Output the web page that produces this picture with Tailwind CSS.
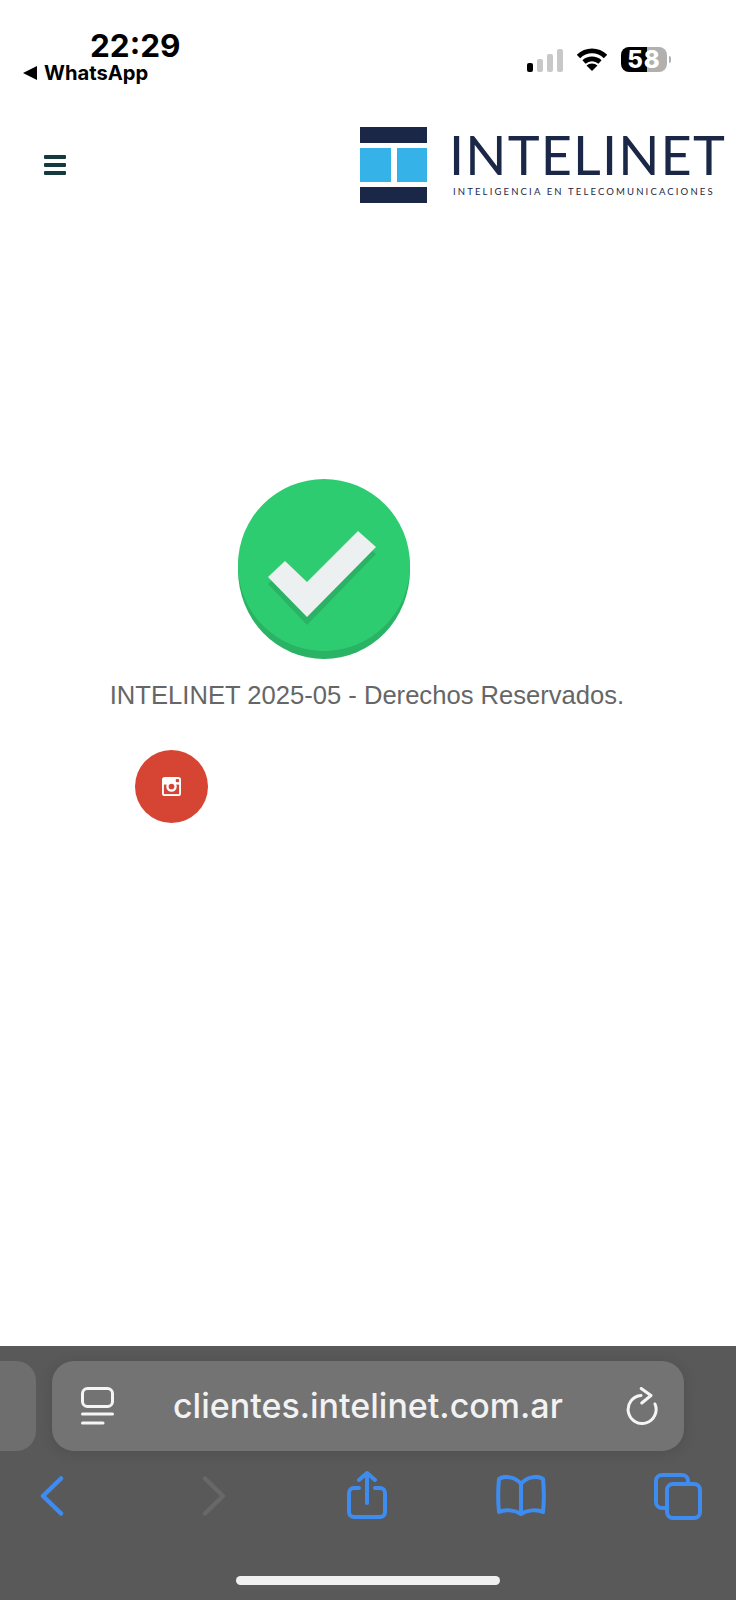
<!DOCTYPE html>
<html lang="es">
<head>
  <meta charset="UTF-8">
  <meta name="viewport" content="width=device-width, initial-scale=1.0">
  <title>Intelinet</title>
  <script src="https://cdn.jsdelivr.net/npm/@tailwindcss/browser@4"></script>
</head>
<body class="w-[736px] h-[1600px] bg-white flex flex-col overflow-hidden font-['Liberation_Sans',sans-serif]">

  <!-- barra de estado -->
  <div class="h-[86px] flex justify-between shrink-0">
    <div class="pl-[23px] pt-[29px]">
      <div class="pl-[67px] h-[33px] text-[31.500px] leading-[33px] font-bold text-black font-['Inter',sans-serif]">22:29</div>
      <div class="flex items-center gap-[7px] h-[22px]">
        <svg width="14" height="14" viewBox="0 0 14 14"><path d="M14 0v14L0 7z" fill="#000"/></svg>
        <span class="text-[20.200px] leading-[22px] font-bold text-black font-['Inter',sans-serif]">WhatsApp</span>
      </div>
    </div>
    <div class="flex items-center gap-[14px] pr-[65px] pt-[33px] h-[86px]">
      <div class="flex items-end gap-[4px] h-[24px]">
        <div class="w-[6px] h-[9px] rounded-[2px] bg-black"></div>
        <div class="w-[6px] h-[13px] rounded-[2px] bg-[#c8c8c8]"></div>
        <div class="w-[6px] h-[18px] rounded-[2px] bg-[#c8c8c8]"></div>
        <div class="w-[6px] h-[23px] rounded-[2px] bg-[#c8c8c8]"></div>
      </div>
      <svg width="30" height="23" viewBox="0 0 30 23">
        <path d="M1.500 8.500C9 1 21 1 28.500 8.500" fill="none" stroke="#000" stroke-width="4.800"/>
        <path d="M7 14C11.500 9.800 18.500 9.800 23 14" fill="none" stroke="#000" stroke-width="4.600"/>
        <path d="M15 23l-5.500-5.500C12.500 14.800 17.500 14.800 20.500 17.500z" fill="#000"/>
      </svg>
      <div class="flex items-center gap-[2px]">
        <div class="w-[46px] h-[25px] rounded-[8px] bg-[linear-gradient(90deg,#000_0,#000_57%,#b0b0b0_57%,#b0b0b0_100%)] flex items-center justify-center text-white text-[24px] tracking-[1px] font-extrabold font-['Inter',sans-serif]">58</div>
        <div class="w-[2px] h-[7px] rounded-r-[2px] bg-[#b0b0b0]"></div>
      </div>
    </div>
  </div>

  <!-- cabecera -->
  <header class="flex justify-between items-center h-[157px] pl-[44px] pr-[11px] shrink-0">
    <div class="flex flex-col gap-[4px] w-[22px]">
      <div class="h-[4px] rounded-[1px] bg-[#143a3d]"></div>
      <div class="h-[4px] rounded-[1px] bg-[#143a3d]"></div>
      <div class="h-[4px] rounded-[1px] bg-[#143a3d]"></div>
    </div>
    <div class="flex items-center gap-[26px]">
      <svg width="67" height="76" viewBox="0 0 67 76">
        <rect width="67" height="16" fill="#1b2747"/>
        <rect y="21" width="31" height="34" fill="#35b3e8"/>
        <rect x="37" y="21" width="30" height="34" fill="#35b3e8"/>
        <rect y="60" width="67" height="16" fill="#1b2747"/>
      </svg>
      <div class="w-[272px]">
        <div class="-ml-[4px] text-[54px] leading-[50px] tracking-[1.150px] text-[#1b2747] font-['Lato',sans-serif] whitespace-nowrap">INTELINET</div>
        <div class="mt-[5px] text-[9.500px] leading-[14px] tracking-[2.150px] text-[#1b2747] font-['Lato',sans-serif] whitespace-nowrap">INTELIGENCIA EN TELECOMUNICACIONES</div>
      </div>
    </div>
  </header>

  <!-- contenido -->
  <main class="flex-1 flex flex-col pt-[236px]">
    <svg class="ml-[238px]" width="172" height="180" viewBox="0 0 172 180">
      <ellipse cx="86" cy="91" rx="86" ry="89" fill="#2bb365"/>
      <ellipse cx="86" cy="86" rx="86" ry="86" fill="#2ecc71"/>
      <path d="M69 146 30 105 47 89 69 110 120 59 138 75z" fill="#2bb365"/>
      <path d="M69 138 30 98 47 82 69 103 120 52 138 68z" fill="#ecf0f1"/>
    </svg>
    <p class="mt-[20px] pr-[2px] text-center text-[25.600px] leading-[32px] text-[#666]">INTELINET 2025-05 - Derechos Reservados.</p>
    <div class="mt-[39px] ml-[135px] w-[73px] h-[73px] rounded-full bg-[#d64533] flex items-center justify-center">
      <svg width="19" height="19" viewBox="0 0 20 20">
        <rect width="20" height="20" rx="3" fill="#fff"/>
        <rect x="2" y="8" width="16" height="10" fill="#d64533"/>
        <circle cx="10" cy="10" r="5.500" fill="#fff"/>
        <circle cx="10" cy="10" r="3" fill="#d64533"/>
        <rect x="14.500" y="2" width="3.500" height="3.500" rx="1" fill="#d64533"/>
      </svg>
    </div>
  </main>

  <!-- barra de safari -->
  <footer class="h-[254px] bg-[#595959] shrink-0 flex flex-col">
    <div class="flex gap-[16px] pt-[15px] h-[105px]">
      <div class="w-[36px] h-[90px] rounded-r-[20px] bg-[#6e6e6e]"></div>
      <div class="w-[632px] h-[90px] rounded-[22px] bg-[#737373] shadow-[0_2px_14px_rgba(0,0,0,0.12)] flex items-center pl-[29px] pr-[26px]">
        <svg width="33" height="38" viewBox="0 0 33 38" fill="none" stroke="#f5f5f5" stroke-width="3" stroke-linecap="round">
          <rect x="1.500" y="1.500" width="30" height="18" rx="5"/>
          <path d="M1.500 27H31.500M1.500 36H22"/>
        </svg>
        <span class="ml-[59px] text-[34px] leading-[40px] font-medium text-[#f2f2f2] font-['Inter',sans-serif]">clientes.intelinet.com.ar</span>
        <svg class="ml-auto" width="32" height="38" viewBox="0 0 32 38" fill="none" stroke="#f5f5f5" stroke-width="3" stroke-linecap="round" stroke-linejoin="round">
          <path d="M15 8.500A14 14 0 1 0 29 17"/>
          <path d="M15.200 1.500 25 8.500 15.800 16"/>
        </svg>
      </div>
    </div>
    <div class="flex items-center h-[70px] mt-[12px] pb-[4px]">
      <svg class="ml-[40px]" width="24" height="40" viewBox="0 0 24 40" fill="none" stroke="#3f8cf0" stroke-width="4.500" stroke-linecap="round" stroke-linejoin="round"><path d="M21 2.500 3 20 21 37.500"/></svg>
      <svg class="ml-[138px]" width="24" height="40" viewBox="0 0 24 40" fill="none" stroke="#686868" stroke-width="4.500" stroke-linecap="round" stroke-linejoin="round"><path d="M3 2.500 21 20 3 37.500"/></svg>
      <svg class="ml-[121px]" width="40" height="50" viewBox="0 0 40 50" fill="none" stroke="#3f8cf0" stroke-width="4" stroke-linecap="round" stroke-linejoin="round">
        <path d="M12 17H7a5 5 0 0 0-5 5v19a5 5 0 0 0 5 5h26a5 5 0 0 0 5-5V22a5 5 0 0 0-5-5h-5"/>
        <path d="M20 32V2M12 9 20 2l8 7"/>
      </svg>
      <svg class="ml-[109px]" width="50" height="42" viewBox="0 0 50 42" fill="none" stroke="#3f8cf0" stroke-width="4" stroke-linecap="round" stroke-linejoin="round">
        <path d="M25 9C20 2 8 0 3 4 2 14 2 27 3 37 9 34 19 35 25 39 31 35 41 34 47 37 48 27 48 14 47 4 42 0 30 2 25 9V39"/>
      </svg>
      <svg class="ml-[108px]" width="48" height="47" viewBox="0 0 48 47" fill="none" stroke="#3f8cf0" stroke-width="4" stroke-linejoin="round">
        <path d="M12 35H8a6 6 0 0 1-6-6V8a6 6 0 0 1 6-6h20a6 6 0 0 1 6 6v3"/>
        <rect x="13" y="11" width="33" height="34" rx="6"/>
      </svg>
    </div>
    <div class="mt-[43px] ml-[236px] w-[264px] h-[9px] rounded-full bg-[#f0f0f0]"></div>
  </footer>
</body>
</html>
